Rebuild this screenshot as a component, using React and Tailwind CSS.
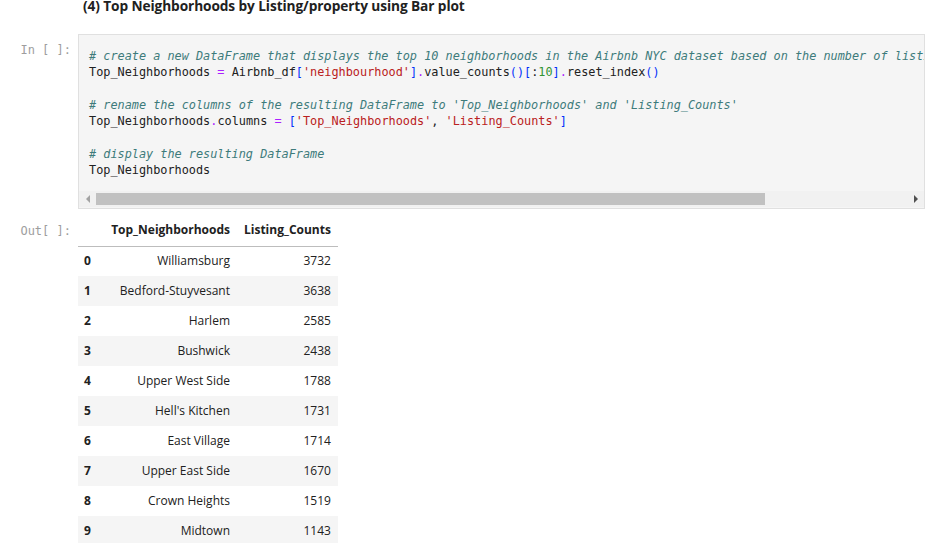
import React from "react";

const mono = { fontFamily: '"DejaVu Sans Mono", "Liberation Mono", monospace' };

const rows = [
  ["0", "Williamsburg", "3732"],
  ["1", "Bedford-Stuyvesant", "3638"],
  ["2", "Harlem", "2585"],
  ["3", "Bushwick", "2438"],
  ["4", "Upper West Side", "1788"],
  ["5", "Hell's Kitchen", "1731"],
  ["6", "East Village", "1714"],
  ["7", "Upper East Side", "1670"],
  ["8", "Crown Heights", "1519"],
  ["9", "Midtown", "1143"],
];

function C({ children }) {
  return <span className="italic text-[#3d7b7b]">{children}</span>;
}
function S({ children }) {
  return <span className="text-[#ba2121]">{children}</span>;
}
function O({ children }) {
  return <span className="text-[#aa22ff]">{children}</span>;
}
function B({ children }) {
  return <span className="text-[#0431fa]">{children}</span>;
}
function P({ children }) {
  return <span className="text-[#319331]">{children}</span>;
}

export default function App() {
  return (
    <div className="w-[943px] h-[543px] overflow-hidden bg-white text-[#212121]" style={{ fontFamily: '"Open Sans", "Noto Sans", sans-serif' }}>
      <div className="pl-[83px] -mt-[3px] text-[13.7px] font-bold leading-[18px] tracking-[-0.1px]">
        (4) Top Neighborhoods by Listing/property using Bar plot
      </div>

      <div className="flex mt-[19px]">
        <div className="w-[78px] shrink-0 pr-[7px] pt-[7px] text-right text-[12px] text-[#9e9e9e]" style={mono}>
          In [ ]:
        </div>
        <div className="w-[847px] h-[175px] border border-[#e0e0e0] bg-[#f5f5f5] flex flex-col">
          <pre className="flex-1 overflow-hidden pl-[10px] pt-[13px] text-[11.85px] leading-[16.3px] whitespace-pre" style={mono}>
            <C># create a new DataFrame that displays the top 10 neighborhoods in the Airbnb NYC dataset based on the number of listings</C>
            {"\n"}Top_Neighborhoods <O>=</O> Airbnb_df<B>[</B><S>'neighbourhood'</S><B>]</B><O>.</O>value_counts<B>()[</B>:<P>10</P><B>]</B><O>.</O>reset_index<B>()</B>
            {"\n\n"}<C># rename the columns of the resulting DataFrame to 'Top_Neighborhoods' and 'Listing_Counts'</C>
            {"\n"}Top_Neighborhoods<O>.</O>columns <O>=</O> <B>[</B><S>'Top_Neighborhoods'</S>, <S>'Listing_Counts'</S><B>]</B>
            {"\n\n"}<C># display the resulting DataFrame</C>
            {"\n"}Top_Neighborhoods
          </pre>
          <div className="h-[16px] mb-[1px] bg-[#f1f1f1] flex items-center">
            <div className="w-[17px] flex justify-center">
              <div className="w-0 h-0 border-y-[4px] border-y-transparent border-r-[4px] border-r-[#a3a3a3]" />
            </div>
            <div className="w-[669px] h-[12px] bg-[#c1c1c1]" />
            <div className="flex-1" />
            <div className="w-[17px] flex justify-center">
              <div className="w-0 h-0 border-y-[4px] border-y-transparent border-l-[4px] border-l-[#505050]" />
            </div>
          </div>
        </div>
      </div>

      <div className="flex mt-[7px]">
        <div className="w-[78px] shrink-0 pr-[7px] pt-[6px] text-right text-[12px] text-[#9e9e9e]" style={mono}>
          Out[ ]:
        </div>
        <table className="border-collapse text-[12px]">
          <thead>
            <tr className="h-[30px] border-b border-[#bdbdbd]">
              <th className="w-[21px]"></th>
              <th className="w-[138px] px-[7px] pb-[2px] text-right font-bold">Top_Neighborhoods</th>
              <th className="w-[100px] px-[7px] pb-[2px] text-right font-bold">Listing_Counts</th>
            </tr>
          </thead>
          <tbody>
            {rows.map((r, i) => (
              <tr key={r[0]} className={i % 2 === 1 ? "h-[30px] bg-[#f5f5f5]" : "h-[30px]"}>
                <th className="pl-[6px] text-left font-bold">{r[0]}</th>
                <td className="px-[7px] text-right">{r[1]}</td>
                <td className="px-[7px] text-right">{r[2]}</td>
              </tr>
            ))}
          </tbody>
        </table>
      </div>
    </div>
  );
}
